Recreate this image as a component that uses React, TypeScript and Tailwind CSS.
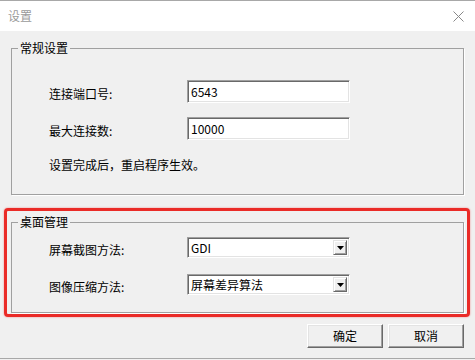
import React from "react"

const font = { fontFamily: '"Noto Sans CJK SC", "Liberation Sans", sans-serif' }

function Field({ value }: { value: string }) {
  return (
    <div className="w-[163px] h-[23px] bg-white border border-t-[#a0a0a0] border-l-[#a0a0a0] border-r-white border-b-white shadow-[inset_1px_1px_0_#696969,inset_-1px_-1px_0_#e3e3e3] flex items-center px-[3px] text-[12px] leading-[16px]">
      {value}
    </div>
  )
}

function Combo({ value }: { value: string }) {
  return (
    <div className="w-[163px] h-[21px] bg-white border border-t-[#a0a0a0] border-l-[#a0a0a0] border-r-white border-b-white shadow-[inset_1px_1px_0_#696969,inset_-1px_-1px_0_#e3e3e3] flex items-center pl-[3px] pr-[2px] text-[12px] leading-[16px]">
      <span className="flex-1">{value}</span>
      <div className="w-[14px] h-[15px] bg-[#f0f0f0] border border-t-[#e3e3e3] border-l-[#e3e3e3] border-r-[#696969] border-b-[#696969] shadow-[inset_1px_1px_0_#fff,inset_-1px_-1px_0_#a0a0a0] flex items-center justify-center">
        <svg width="7" height="4" viewBox="0 0 7 4">
          <polygon points="0,0 7,0 3.5,4" fill="#000" />
        </svg>
      </div>
    </div>
  )
}

function Group({ title, children, className }: { title: string; children: React.ReactNode; className: string }) {
  return (
    <div className={`relative border border-[#a0a0a0] shadow-[1px_1px_0_#fff] ${className}`}>
      <span className="absolute left-[6px] -top-[9px] bg-[#f0f0f0] px-[2px] text-[12px] leading-[16px] text-black">
        {title}
      </span>
      {children}
    </div>
  )
}

function Row({ label, children }: { label: string; children: React.ReactNode }) {
  return (
    <div className="flex items-center">
      <span className="w-[138px] pt-[4px] text-[12px] leading-[16px]">{label}</span>
      {children}
    </div>
  )
}

function Button({ label }: { label: string }) {
  return (
    <button className="w-[76px] h-[24px] bg-[#f0f0f0] border border-t-[#fff] border-l-[#fff] border-r-[#696969] border-b-[#696969] shadow-[inset_-1px_-1px_0_#a0a0a0,inset_1px_1px_0_#e3e3e3] text-[12px] leading-[16px] text-black">
      {label}
    </button>
  )
}

export default function App() {
  return (
    <div className="w-[475px] h-[360px] bg-[#f0f0f0] flex flex-col overflow-hidden text-black" style={font}>
      <div className="h-px bg-[#a8a8a8]" />
      {/* Title bar */}
      <div className="h-[30px] bg-white flex items-center justify-between pl-[8px] pr-[11px]">
        <span className="text-[12px] leading-[16px] text-[#9a9a9a]">设置</span>
        <svg width="11" height="11" viewBox="0 0 11 11" className="mr-[0px]">
          <path d="M0.5 0.5 L10.5 10.5 M10.5 0.5 L0.5 10.5" stroke="#888" strokeWidth="1" />
        </svg>
      </div>

      <div className="flex-1 flex flex-col">
        <Group title="常规设置" className="mt-[17px] ml-[11px] w-[453px] h-[147px] pt-[31px] pl-[37px]">
          <div className="flex flex-col gap-[14px]">
            <Row label="连接端口号:">
              <Field value="6543" />
            </Row>
            <Row label="最大连接数:">
              <Field value="10000" />
            </Row>
          </div>
          <p className="mt-[17px] text-[12px] leading-[16px]">设置完成后，重启程序生效。</p>
        </Group>

        {/* highlighted section */}
        <div className="mt-[13px] ml-[4px] w-[466px] h-[109px] border-[3px] border-[#ea2b27] rounded-[4px] shadow-[0_0_2px_#f08080] pt-[11px] pl-[4px]">
          <Group title="桌面管理" className="w-[453px] h-[91px] pt-[14px] pl-[37px]">
            <div className="flex flex-col gap-[16px]">
              <Row label="屏幕截图方法:">
                <Combo value="GDI" />
              </Row>
              <Row label="图像压缩方法:">
                <Combo value="屏幕差异算法" />
              </Row>
            </div>
          </Group>
        </div>

        <div className="mt-[7px] flex justify-end gap-[5px] pr-[11px]">
          <Button label="确定" />
          <Button label="取消" />
        </div>
      </div>
      <div className="h-px bg-[#a8a8a8]" />
      <div className="h-px bg-[#f0f0f0]" />
    </div>
  )
}
